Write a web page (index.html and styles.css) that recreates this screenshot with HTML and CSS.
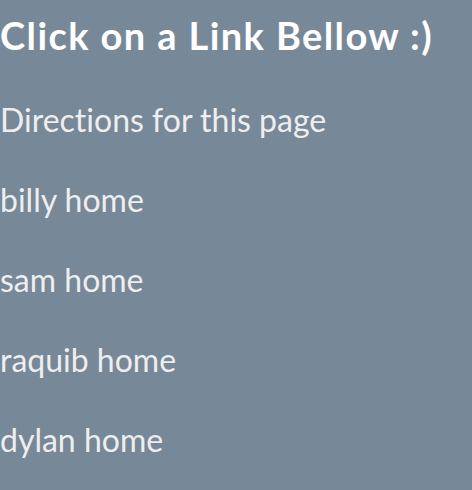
FILE: index.html
```html
<!DOCTYPE html>
<html>
<head>
<meta charset="utf-8">
<link rel="stylesheet" href="styles.css">
</head>
<body>
<h1 class="title">Click on a Link Bellow :)</h1>
<nav class="links">
<a class="link" href="#">Directions for this page</a>
<a class="link" href="#">billy home</a>
<a class="link" href="#">sam home</a>
<a class="link" href="#">raquib home</a>
<a class="link" href="#">dylan home</a>
</nav>
</body>
</html>
```
FILE: styles.css
```css
html, body {
  margin: 0;
  padding: 0;
  background: #778899;
}
body {
  font-family: Lato, "Open Sans", sans-serif;
  color: #fff;
  font-variant-ligatures: none;
}
.title {
  margin: 0;
  padding-top: 12px;
  font-size: 38px;
  font-weight: 700;
  letter-spacing: 1.4px;
  line-height: 46px;
  color: #fff;
}
.links {
  display: flex;
  flex-direction: column;
  gap: 40px;
  padding-top: 42px;
}
.link {
  display: block;
  font-size: 32px;
  line-height: 40px;
  color: #eeeeee;
  text-decoration: none;
}
```
